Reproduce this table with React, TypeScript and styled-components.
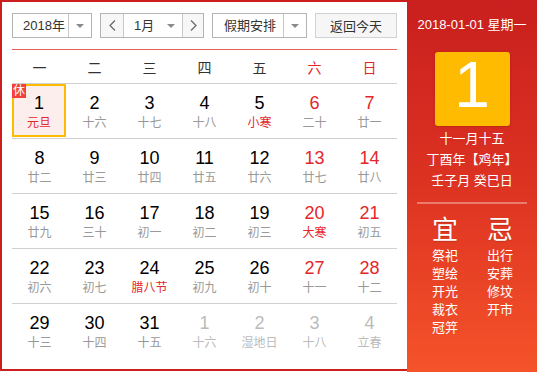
import React from "react";
import styled, { createGlobalStyle } from "styled-components";

const GlobalStyle = createGlobalStyle`
  html, body {
    margin: 0;
    padding: 0;
    background: #fff;
  }
  body {
    font-family: "Liberation Sans", Arial, "Noto Sans CJK SC", sans-serif;
  }
  * {
    box-sizing: border-box;
  }
`;

const RED = "#e4262b";

const weekNames = ["一", "二", "三", "四", "五", "六", "日"];

const lunarNames = [
  "元旦", "十六", "十七", "十八", "小寒", "二十", "廿一",
  "廿二", "廿三", "廿四", "廿五", "廿六", "廿七", "廿八",
  "廿九", "三十", "初一", "初二", "初三", "大寒", "初五",
  "初六", "初七", "腊八节", "初九", "初十", "十一", "十二",
  "十三", "十四", "十五", "十六", "湿地日", "十八", "立春",
];

const festivals = ["元旦", "小寒", "大寒", "腊八节"];

const goodThings = ["祭祀", "塑绘", "开光", "裁衣", "冠笄"];
const badThings = ["出行", "安葬", "修坟", "开市"];

export default function App() {
  const days = lunarNames.map((lunar, i) => {
    const other = i >= 31;
    return {
      day: other ? i - 30 : i + 1,
      lunar,
      other,
      weekend: i % 7 >= 5,
      festival: !other && festivals.includes(lunar),
      today: i === 0,
    };
  });

  const weeks = [0, 1, 2, 3, 4].map((w) => days.slice(w * 7, w * 7 + 7));

  return (
    <>
      <GlobalStyle />
      <Widget>
        <Main>
          <Toolbar>
            <Select $width={80}>
              <SelectLabel>2018年</SelectLabel>
              <ArrowBox $divider>
                <Caret />
              </ArrowBox>
            </Select>

            <Select $width={104}>
              <NavButton>
                <svg width="7" height="11" viewBox="0 0 7 11">
                  <polyline points="6,0.5 1,5.5 6,10.5" fill="none" stroke="#666" strokeWidth="1.2" />
                </svg>
              </NavButton>
              <MonthBox>
                <SelectLabel>1月</SelectLabel>
                <ArrowBox>
                  <Caret />
                </ArrowBox>
              </MonthBox>
              <NavButton $right>
                <svg width="7" height="11" viewBox="0 0 7 11">
                  <polyline points="1,0.5 6,5.5 1,10.5" fill="none" stroke="#666" strokeWidth="1.2" />
                </svg>
              </NavButton>
            </Select>

            <Select $width={95}>
              <SelectLabel $pad={11}>假期安排</SelectLabel>
              <ArrowBox $divider>
                <Caret />
              </ArrowBox>
            </Select>

            <TodayButton>返回今天</TodayButton>
          </Toolbar>

          <WeekHeader>
            {weekNames.map((name, i) => (
              <WeekName key={name} $red={i >= 5}>
                {name}
              </WeekName>
            ))}
          </WeekHeader>

          {weeks.map((week, w) => (
            <WeekRow key={w}>
              {week.map((d) => (
                <DayCell key={`${w}-${d.day}`} $today={d.today}>
                  {d.today && <RestBadge>休</RestBadge>}
                  <DayNum $other={d.other} $weekend={d.weekend}>
                    {d.day}
                  </DayNum>
                  <Lunar $other={d.other} $festival={d.festival}>
                    {d.lunar}
                  </Lunar>
                </DayCell>
              ))}
            </WeekRow>
          ))}
        </Main>

        <Panel>
          <DateLine>2018-01-01 星期一</DateLine>
          <BigDay>1</BigDay>
          <LunarInfo>
            <div>十一月十五</div>
            <div>丁酉年【鸡年】</div>
            <div>壬子月 癸巳日</div>
          </LunarInfo>
          <Divider />
          <Almanac>
            <AlmanacCol>
              <AlmanacTitle>宜</AlmanacTitle>
              {goodThings.map((t) => (
                <AlmanacItem key={t}>{t}</AlmanacItem>
              ))}
            </AlmanacCol>
            <AlmanacCol>
              <AlmanacTitle>忌</AlmanacTitle>
              {badThings.map((t) => (
                <AlmanacItem key={t}>{t}</AlmanacItem>
              ))}
            </AlmanacCol>
          </Almanac>
        </Panel>
      </Widget>
    </>
  );
}

const Widget = styled.div`
  display: flex;
  align-items: flex-start;
  width: 537px;
`;

const Main = styled.div`
  width: 407px;
  height: 371px;
  border: 2px solid #cc1f1d;
  border-right: none;
  padding: 11px 10px 11px 10px;
  background: #fff;
`;

const Toolbar = styled.div`
  display: flex;
  justify-content: space-between;
  height: 25px;
  padding-bottom: 0;
  margin-bottom: 11px;
  font-size: 13px;
  color: #333;
`;

const Select = styled.div<{ $width: number }>`
  display: flex;
  width: ${(p) => p.$width}px;
  height: 25px;
  border: 1px solid #b4b4b4;
  background: #fff;
`;

const SelectLabel = styled.div<{ $pad?: number }>`
  flex: 1;
  display: flex;
  align-items: center;
  padding-left: ${(p) => p.$pad ?? 10}px;
  line-height: 23px;
  white-space: nowrap;
`;

const ArrowBox = styled.div<{ $divider?: boolean }>`
  width: 23px;
  display: flex;
  align-items: center;
  justify-content: center;
  border-left: ${(p) => (p.$divider ? "1px solid #c8c8c8" : "none")};
`;

const Caret = styled.span`
  width: 0;
  height: 0;
  border-left: 4px solid transparent;
  border-right: 4px solid transparent;
  border-top: 4px solid #8a8a8a;
`;

const NavButton = styled.div<{ $right?: boolean }>`
  width: ${(p) => (p.$right ? 21 : 23)}px;
  display: flex;
  align-items: center;
  justify-content: center;
  background: #f7f7f7;
  border-left: ${(p) => (p.$right ? "1px solid #c8c8c8" : "none")};
  border-right: ${(p) => (p.$right ? "none" : "1px solid #c8c8c8")};
`;

const MonthBox = styled.div`
  flex: 1;
  display: flex;
`;

const TodayButton = styled.div`
  width: 82px;
  height: 25px;
  display: flex;
  align-items: center;
  justify-content: center;
  border: 1px solid #d2d2d2;
  background: #f6f6f6;
  color: #333;
  font-size: 13px;
`;

const WeekHeader = styled.div`
  display: grid;
  grid-template-columns: repeat(7, 55px);
  height: 34px;
  border-top: 1px solid #e8605a;
  align-items: center;
`;

const WeekName = styled.div<{ $red?: boolean }>`
  text-align: center;
  font-size: 14px;
  color: ${(p) => (p.$red ? RED : "#333")};
`;

const WeekRow = styled.div`
  display: grid;
  grid-template-columns: repeat(7, 55px);
  height: 55px;
  border-top: 1px solid #d0d0d0;
`;

const DayCell = styled.div<{ $today?: boolean }>`
  position: relative;
  display: flex;
  flex-direction: column;
  align-items: center;
  padding-top: 9px;
  width: ${(p) => (p.$today ? "54px" : "auto")};
  height: ${(p) => (p.$today ? "53px" : "auto")};
  background: ${(p) => (p.$today ? "#fdeeee" : "transparent")};
  box-shadow: ${(p) => (p.$today ? "inset 0 0 0 2px #ffbb00" : "none")};
`;

const RestBadge = styled.span`
  position: absolute;
  left: 0;
  top: 0;
  width: 14px;
  height: 14px;
  background: #f2403a;
  color: #fff;
  font-size: 12px;
  line-height: 14px;
  text-align: center;
`;

const DayNum = styled.div<{ $other?: boolean; $weekend?: boolean }>`
  font-size: 18px;
  line-height: 20px;
  color: ${(p) => (p.$other ? "#bbb" : p.$weekend ? RED : "#000")};
`;

const Lunar = styled.div<{ $other?: boolean; $festival?: boolean }>`
  margin-top: 2px;
  font-size: 12px;
  line-height: 16px;
  white-space: nowrap;
  color: ${(p) => (p.$other ? "#bbb" : p.$festival ? RED : "#999")};
`;

const Panel = styled.aside`
  width: 130px;
  height: 372px;
  display: flex;
  flex-direction: column;
  align-items: center;
  padding-top: 16px;
  color: #fff;
  background: linear-gradient(180deg, #c91f1e 0%, #dd3322 50%, #f5532a 100%);
`;

const DateLine = styled.div`
  font-size: 13px;
  line-height: 18px;
  white-space: nowrap;
`;

const BigDay = styled.div`
  margin-top: 18px;
  width: 75px;
  height: 74px;
  border-radius: 3px;
  background: #ffbb00;
  box-shadow: 0 1px 3px rgba(120, 20, 0, 0.25);
  color: #fff;
  font-size: 64px;
  line-height: 66px;
  text-align: center;
`;

const LunarInfo = styled.div`
  margin-top: 2px;
  font-size: 13px;
  line-height: 21px;
  text-align: center;
  white-space: nowrap;
`;

const Divider = styled.div`
  margin-top: 11px;
  width: 110px;
  height: 2px;
  background: rgba(255, 255, 255, 0.35);
`;

const Almanac = styled.div`
  display: grid;
  grid-template-columns: 50px 50px;
  column-gap: 5px;
  width: 130px;
  padding-left: 13px;
  margin-top: 11px;
`;

const AlmanacCol = styled.div`
  display: flex;
  flex-direction: column;
  align-items: center;
`;

const AlmanacTitle = styled.div`
  font-size: 26px;
  line-height: 30px;
  margin-bottom: 2px;
  text-shadow: 0 1px 1px rgba(120, 20, 0, 0.3);
`;

const AlmanacItem = styled.div`
  font-size: 13px;
  line-height: 18px;
`;
